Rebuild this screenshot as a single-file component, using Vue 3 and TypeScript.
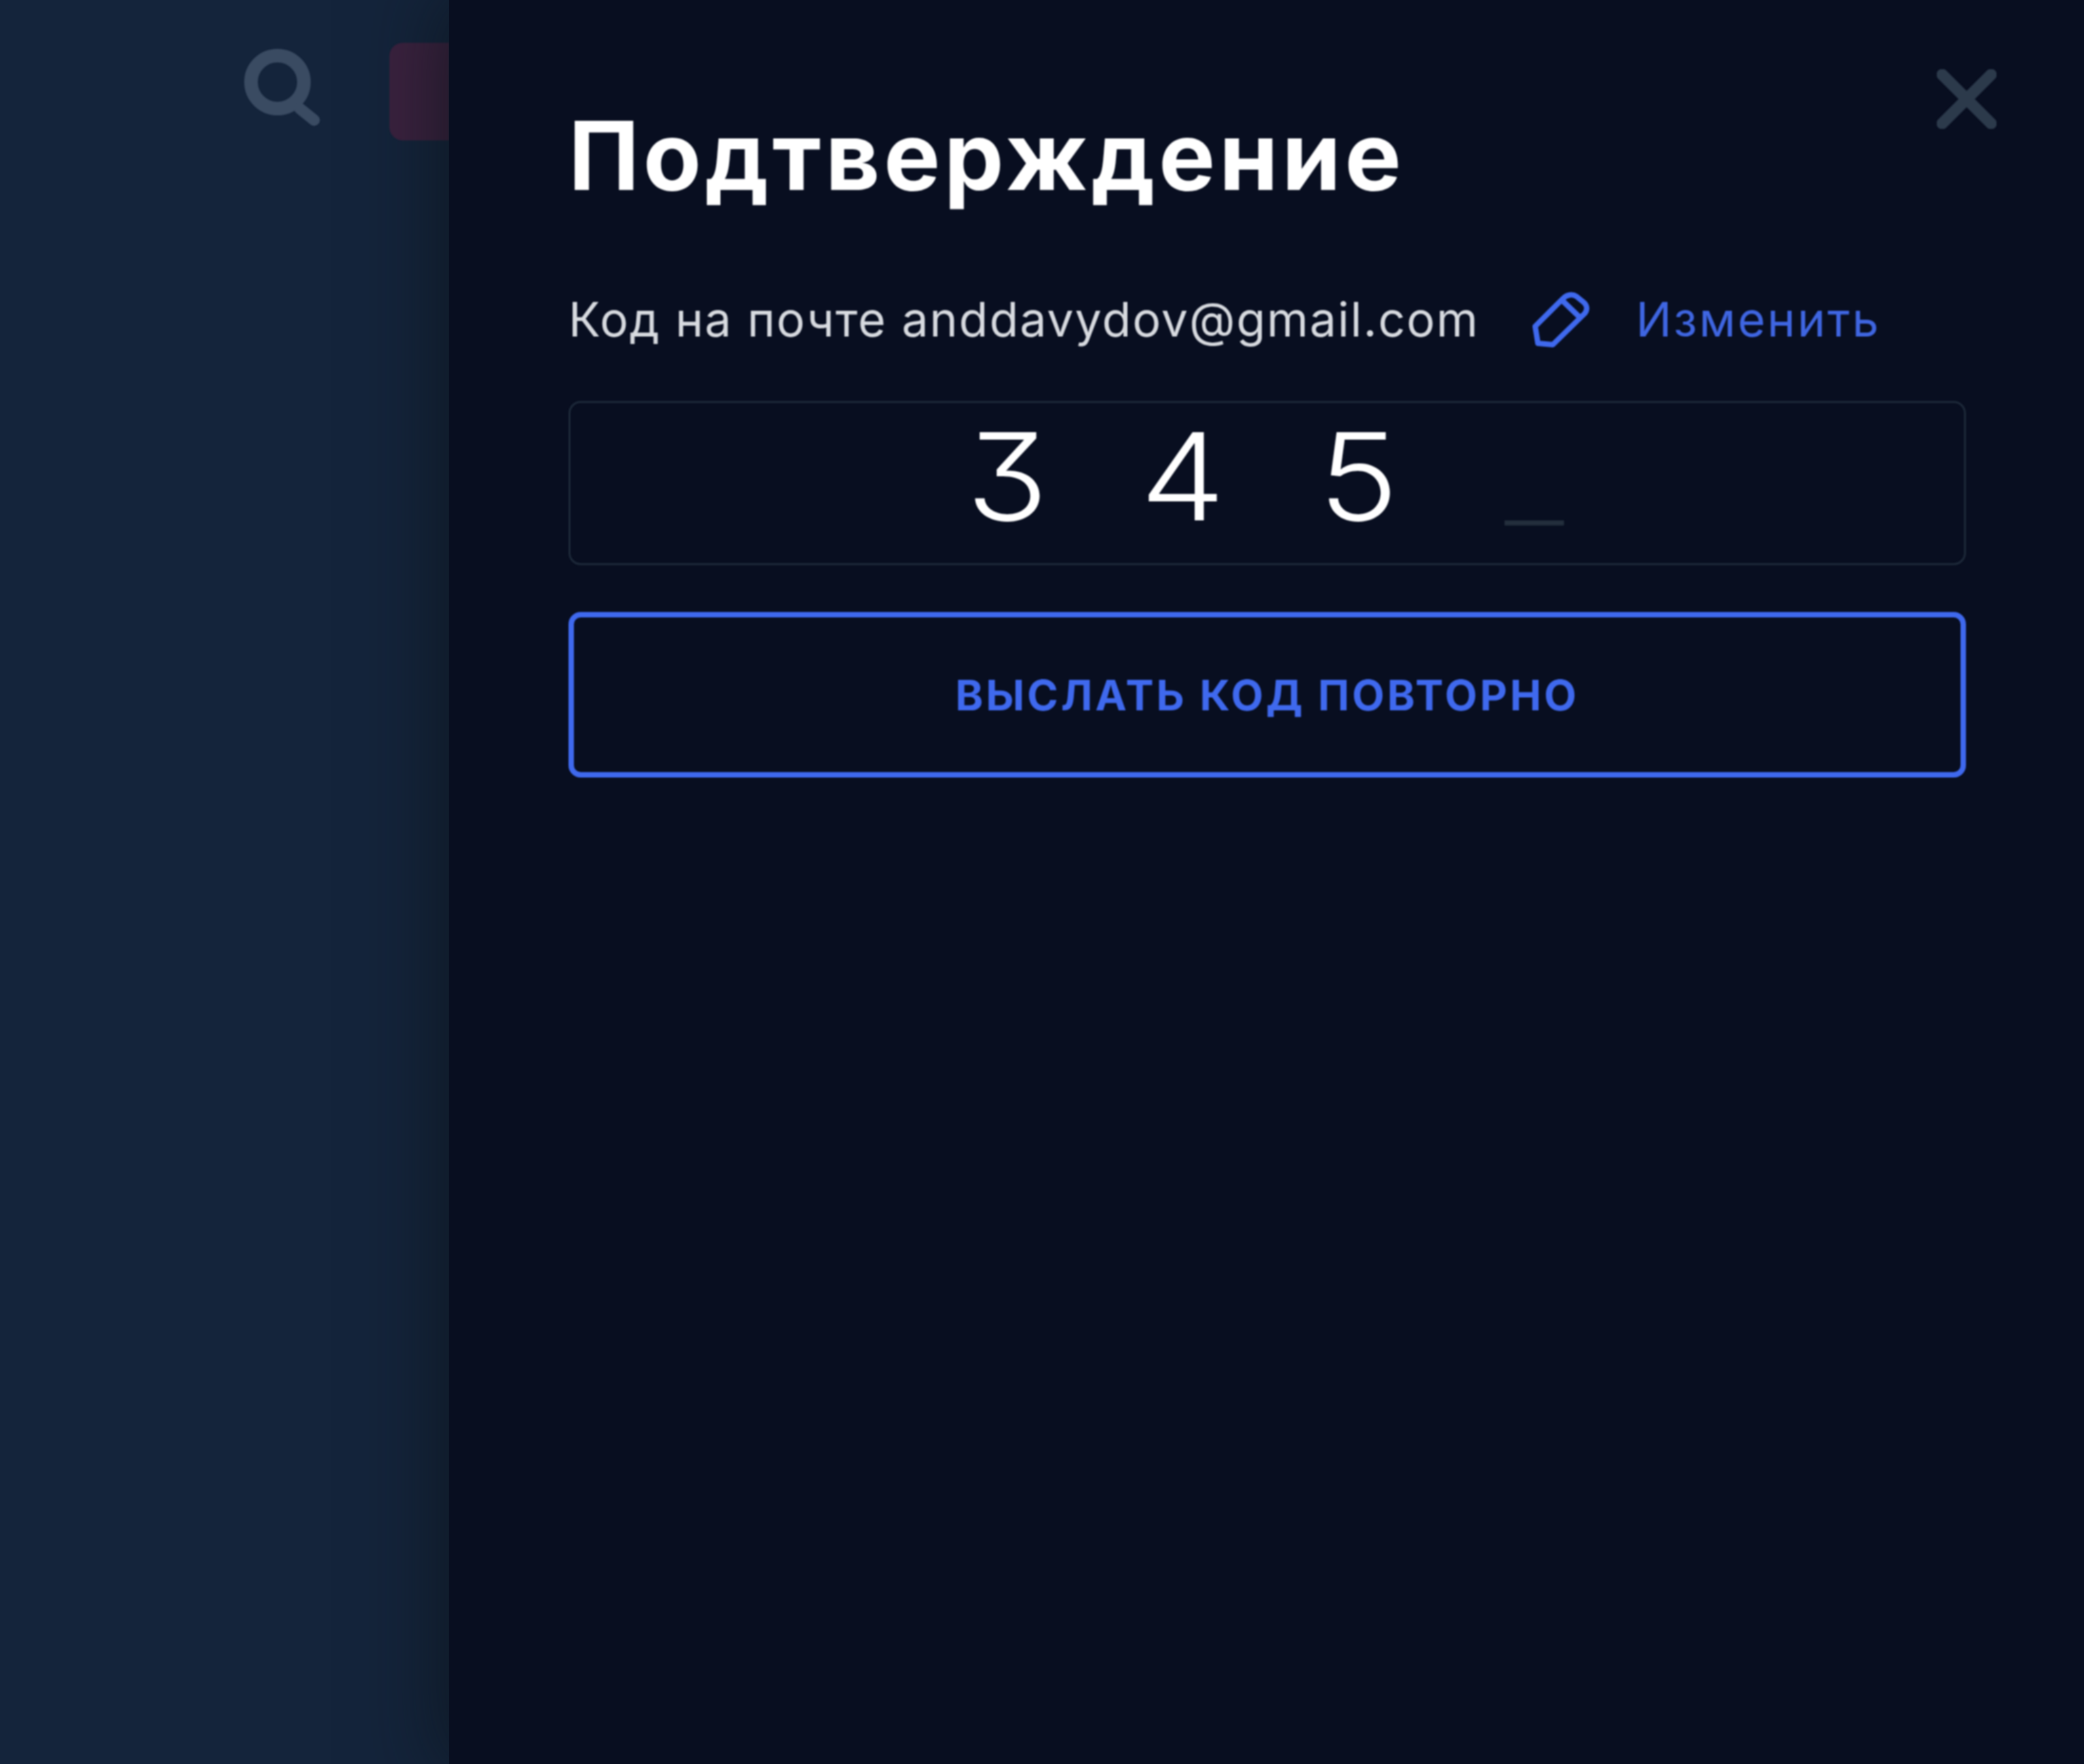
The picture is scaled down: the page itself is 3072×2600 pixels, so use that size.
<template>
  <div class="page">
    <div class="backdrop">
      <svg class="search-icon soft" viewBox="0 0 112 114" fill="none" aria-hidden="true">
        <circle cx="49" cy="49" r="39" stroke="#3a4b62" stroke-width="20" />
        <path d="M82 88 L103 105" stroke="#3a4b62" stroke-width="17" stroke-linecap="round" />
      </svg>
      <div class="login-tile soft"></div>
    </div>

    <section class="drawer">
      <button class="close-btn soft" type="button" aria-label="Закрыть">
        <svg viewBox="0 0 88 88" fill="none">
          <path d="M8 8 L80 80 M80 8 L8 80" stroke="#2c3a4b" stroke-width="17" stroke-linecap="round" />
        </svg>
      </button>

      <h1 class="title soft">Подтверждение</h1>

      <div class="hint-row soft">
        <span class="hint">Код на почте {{ email }}</span>
        <a class="change-link">
          <svg class="pencil" viewBox="0 0 85 84" fill="none">
            <path
              d="M5 52 L46 11 C52 5 60 4 66 8 L77 17 C82 22 82 28 78 33 L31 79 L9 77 Z M44 13 L70 38"
              stroke="#3f69ee"
              stroke-width="8"
              stroke-linejoin="round"
            />
          </svg>
          <span class="change-text">Изменить</span>
        </a>
      </div>

      <div class="code-box soft">
        <span v-for="(cell, i) in codeCells" :key="i" class="code-cell" :class="{ empty: !cell }">
          {{ cell || "_" }}
        </span>
      </div>

      <button class="resend-btn soft" type="button">ВЫСЛАТЬ КОД ПОВТОРНО</button>
    </section>
  </div>
</template>

<script setup lang="ts">
const email = "anddavydov@gmail.com";
const codeCells: string[] = ["3", "4", "5", ""];
</script>

<style scoped>
.page {
  display: flex;
  width: 3072px;
  height: 2600px;
  overflow: hidden;
  font-family: Inter, "Noto Sans", sans-serif;
  font-feature-settings: "cv09" 1;
  background: #14243b;
}

/* the source capture is slightly soft */
.soft {
  filter: blur(1px);
}

.backdrop {
  display: flex;
  justify-content: flex-end;
  align-items: flex-start;
  flex: 0 0 662px;
  padding-top: 63px;
  overflow: hidden;
}

.search-icon {
  flex: none;
  width: 112px;
  height: 114px;
  margin-top: 9px;
  margin-right: 102px;
}

.login-tile {
  flex: none;
  width: 88px;
  height: 144px;
  border-radius: 20px 0 0 20px;
  background: #3b223f;
}

.drawer {
  position: relative;
  flex: 1;
  padding: 144px 174px 0 176px;
  background: #080e20;
  box-shadow: 0 0 110px 10px rgba(12, 18, 24, 0.7);
}

.close-btn {
  position: absolute;
  top: 102px;
  right: 129px;
  width: 88px;
  height: 88px;
  padding: 0;
  border: 0;
  background: none;
}

.close-btn svg {
  display: block;
  width: 88px;
  height: 88px;
}

.title {
  margin: 0;
  font-size: 140px;
  line-height: 170px;
  font-weight: 700;
  letter-spacing: 5.5px;
  color: #fff;
}

.hint-row {
  display: flex;
  align-items: center;
  height: 100px;
  margin-top: 107px;
  font-size: 70px;
  line-height: 100px;
  letter-spacing: 1.9px;
}

.hint {
  color: #d8dbe0;
}

.change-link {
  display: flex;
  align-items: center;
  margin-left: 78px;
  color: #3f66e2;
}

.change-text {
  letter-spacing: 2.9px;
}

.pencil {
  flex: none;
  width: 85px;
  height: 84px;
  margin-right: 68px;
}

.code-box {
  display: flex;
  justify-content: center;
  align-items: center;
  box-sizing: border-box;
  height: 242px;
  margin-top: 70px;
  padding: 0 0 18px 10px;
  border: 3px solid #1d2939;
  border-radius: 18px;
}

.code-cell {
  width: 259px;
  text-align: center;
  font-size: 178px;
  line-height: 222px;
  font-weight: 300;
  color: #fff;
  transform: scaleX(1.12);
}

.code-cell.empty {
  font-weight: 200;
  color: #232e3c;
}

.resend-btn {
  display: block;
  box-sizing: border-box;
  width: 100%;
  height: 244px;
  margin-top: 69px;
  border: 8px solid #3f69ee;
  border-radius: 18px;
  background: none;
  font-family: inherit;
  font-size: 62px;
  font-weight: 700;
  letter-spacing: 4px;
  color: #3f69ee;
}
</style>
